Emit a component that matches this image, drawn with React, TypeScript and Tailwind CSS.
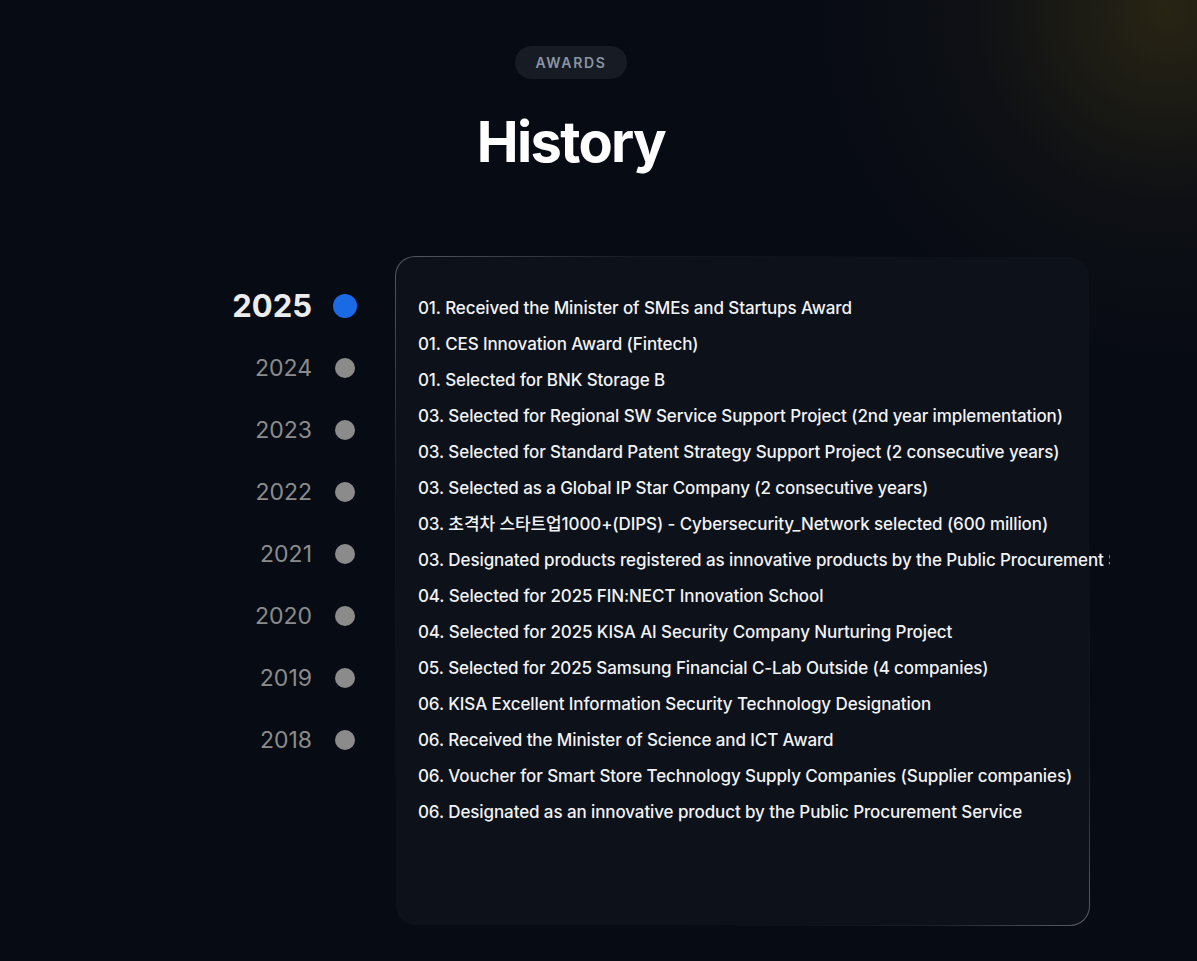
const years = ["2025", "2024", "2023", "2022", "2021", "2020", "2019", "2018"];

const items = [
  "01. Received the Minister of SMEs and Startups Award",
  "01. CES Innovation Award (Fintech)",
  "01. Selected for BNK Storage B",
  "03. Selected for Regional SW Service Support Project (2nd year implementation)",
  "03. Selected for Standard Patent Strategy Support Project (2 consecutive years)",
  "03. Selected as a Global IP Star Company (2 consecutive years)",
  "03. 초격차 스타트업1000+(DIPS) - Cybersecurity_Network selected (600 million)",
  "03. Designated products registered as innovative products by the Public Procurement Service",
  "04. Selected for 2025 FIN:NECT Innovation School",
  "04. Selected for 2025 KISA AI Security Company Nurturing Project",
  "05. Selected for 2025 Samsung Financial C-Lab Outside (4 companies)",
  "06. KISA Excellent Information Security Technology Designation",
  "06. Received the Minister of Science and ICT Award",
  "06. Voucher for Smart Store Technology Supply Companies (Supplier companies)",
  "06. Designated as an innovative product by the Public Procurement Service",
];

export default function App() {
  return (
    <section className="relative h-[961px] w-full overflow-hidden bg-[#070b14] font-['Inter','Noto_Sans_CJK_KR',sans-serif]">
      {/* warm glow in the top right corner */}
      <div className="pointer-events-none absolute -right-[330px] -top-[350px] h-[720px] w-[720px] rounded-full bg-[radial-gradient(circle,rgba(110,90,20,0.32)_0%,rgba(60,50,20,0.13)_38%,rgba(7,11,20,0)_70%)]" />

      <div className="relative">
        {/* Header */}
        <div className="flex flex-col items-center pr-[55px] pt-[46px]">
          <span className="rounded-full bg-[#161b24] px-5 py-[6px] text-[14px] font-semibold tracking-[0.12em] text-[#8a95a3]">
            AWARDS
          </span>
          <h2 className="mt-[35px] text-[56px] font-bold leading-none tracking-[-0.03em] text-white">
            History
          </h2>
        </div>

        {/* Timeline */}
        <div className="mt-[86px] flex items-start pl-[200px]">
          <ul className="flex w-[157px] flex-col pt-[19px]">
            {years.map((y, i) => (
              <li key={y} className="flex h-[62px] items-center justify-end">
                <span
                  className={
                    i === 0
                      ? "text-[31px] font-bold text-[#ececec]"
                      : "text-[23px] font-normal text-[#8b8b8b]"
                  }
                >
                  {y}
                </span>
                {i === 0 ? (
                  <span className="ml-[21px] h-6 w-6 rounded-full bg-[#1a6ae6]" />
                ) : (
                  <span className="ml-[23px] mr-[2px] h-5 w-5 rounded-full bg-[#8b8b8b]" />
                )}
              </li>
            ))}
          </ul>

          <div className="ml-[38px] rounded-[20px] bg-[linear-gradient(135deg,rgba(150,155,165,0.55)_0%,rgba(60,64,72,0.25)_18%,rgba(13,17,26,0)_40%,rgba(13,17,26,0)_70%,rgba(60,64,72,0.3)_88%,rgba(150,155,165,0.6)_100%)] p-px">
            <div className="h-[668px] w-[693px] rounded-[19px] bg-[#0d111a] pl-[22px] pt-[33px]">
              <ul className="w-[692px] overflow-hidden whitespace-nowrap">
                {items.map((t, i) => (
                  <li
                    key={i}
                    className="text-[17px] font-medium leading-9 tracking-[-0.006em] text-[#f2f3f5]"
                  >
                    {t}
                  </li>
                ))}
              </ul>
            </div>
          </div>
        </div>
      </div>
    </section>
  );
}
